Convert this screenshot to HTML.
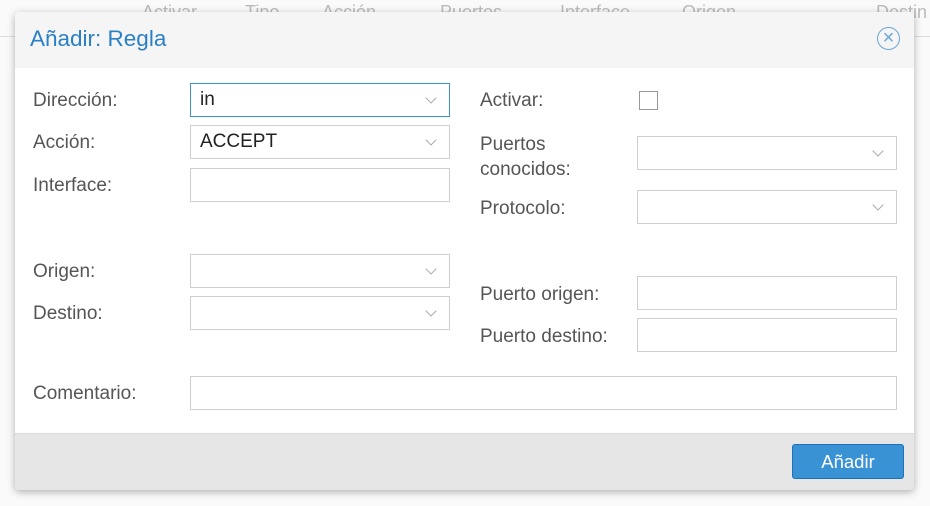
<!DOCTYPE html><html><head><style>
body{margin:0;width:930px;height:506px;background:#fafafa;font-family:"Liberation Sans",sans-serif;position:relative;overflow:hidden}
.bg{position:absolute;left:0;top:0;width:930px;height:36px;border-bottom:1px solid #ddd;color:#bbb;font-size:18px}
.bg span{position:absolute;top:2px}
.dlg{position:absolute;left:15px;top:12px;width:899px;height:478px;background:#fff;border-radius:4px;box-shadow:0 2px 8px rgba(0,0,0,.3);overflow:hidden}
.hd{height:56px;background:#f5f5f5;position:relative}
.hd .t{position:absolute;left:15px;top:14px;font-size:22.5px;color:#2b80c5}
.x{position:absolute;right:14px;top:15px;width:23px;height:23px;border:1.5px solid #6aa6d6;border-radius:50%;color:#6aa6d6;font-size:20px;line-height:20px;text-align:center;box-sizing:border-box}
.ft{position:absolute;left:0;bottom:0;width:100%;height:56px;background:#e6e6e6;border-top:1px solid #ddd}
.btn{position:absolute;left:777px;top:10px;width:110px;height:33px;background:#3892d4;border:1px solid #1e6fb8;border-radius:3px;color:#fff;font-size:18.5px;text-align:center;line-height:33px}
.l{position:absolute;font-size:19px;color:#555}
.f{position:absolute;height:34px;border:1px solid #cfcfcf;box-sizing:border-box;font-size:19px;color:#222;padding-left:9px;line-height:32px;background:#fff}
.s::after{content:"";position:absolute;right:14px;top:10px;width:7px;height:7px;border-right:1px solid #aaa;border-bottom:1px solid #aaa;transform:rotate(45deg)}
</style></head><body>
<div class="bg"><span style="left:142px">Activar</span><span style="left:245px">Tipo</span><span style="left:322px">Acción</span><span style="left:440px">Puertos</span><span style="left:560px">Interface</span><span style="left:682px">Origen</span><span style="left:876px">Destin</span></div>
<div class="dlg">
<div class="hd"><div class="t">Añadir: Regla</div><div class="x">×</div></div>
<div class="l" style="left:18px;top:78px">Dirección:</div>
<div class="f s" style="left:175px;top:71px;width:260px;border-color:#3892d4">in</div>
<div class="l" style="left:18px;top:120px">Acción:</div>
<div class="f s" style="left:175px;top:113px;width:260px">ACCEPT</div>
<div class="l" style="left:18px;top:163px">Interface:</div>
<div class="f" style="left:175px;top:156px;width:260px"></div>
<div class="l" style="left:18px;top:249px">Origen:</div>
<div class="f s" style="left:175px;top:242px;width:260px"></div>
<div class="l" style="left:18px;top:291px">Destino:</div>
<div class="f s" style="left:175px;top:284px;width:260px"></div>
<div class="l" style="left:465px;top:78px">Activar:</div>
<div style="position:absolute;left:624px;top:79px;width:19px;height:19px;border:1px solid #999;box-sizing:border-box"></div>
<div class="l" style="left:465px;top:120px;line-height:25px">Puertos<br>conocidos:</div>
<div class="f s" style="left:622px;top:124px;width:260px"></div>
<div class="l" style="left:465px;top:186px">Protocolo:</div>
<div class="f s" style="left:622px;top:178px;width:260px"></div>
<div class="l" style="left:465px;top:272px">Puerto origen:</div>
<div class="f" style="left:622px;top:264px;width:260px"></div>
<div class="l" style="left:465px;top:314px">Puerto destino:</div>
<div class="f" style="left:622px;top:306px;width:260px"></div>
<div class="l" style="left:18px;top:371px">Comentario:</div>
<div class="f" style="left:175px;top:364px;width:707px"></div>
<div class="ft"><div class="btn">Añadir</div></div>
</div>
</body></html>
